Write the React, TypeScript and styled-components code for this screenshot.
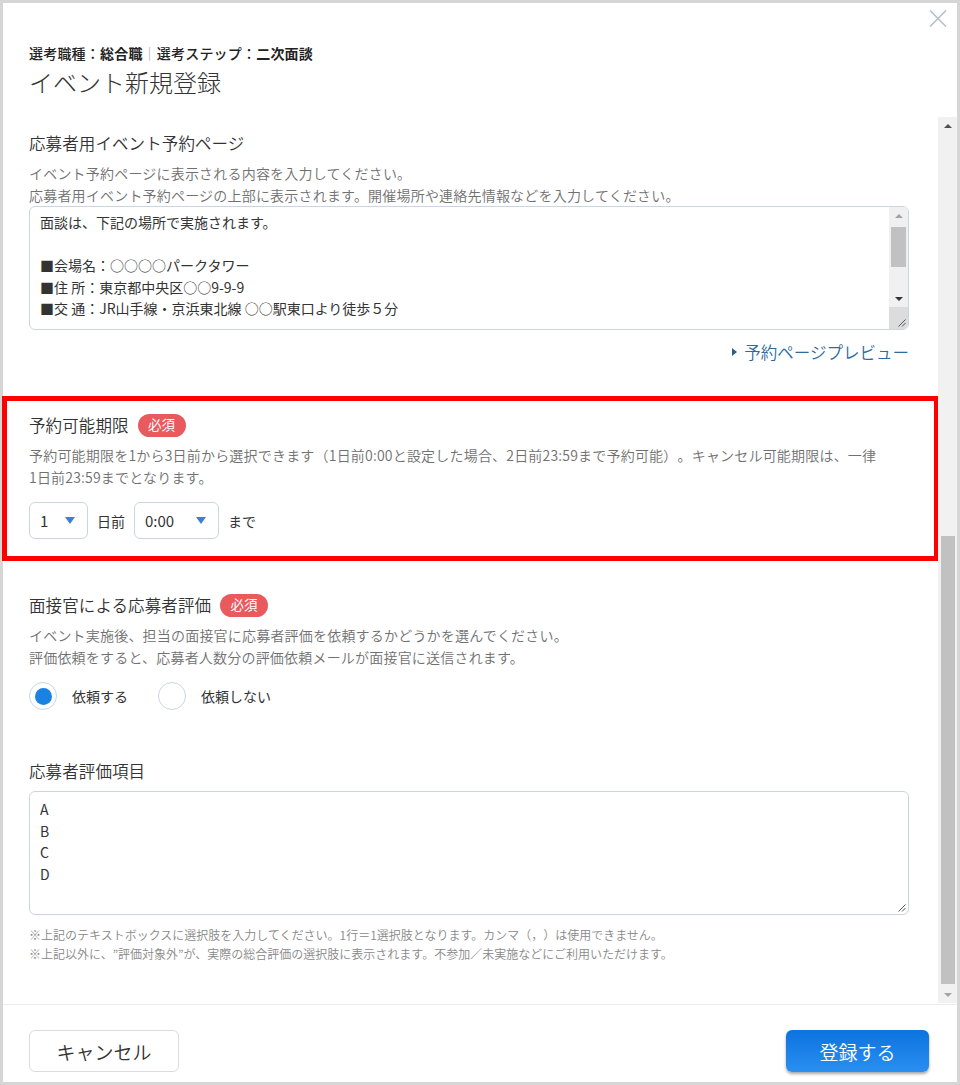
import React from "react";
import styled, { createGlobalStyle } from "styled-components";

const GlobalStyle = createGlobalStyle`
  html, body { margin: 0; padding: 0; background: #fff; }
  body {
    font-family: "Noto Sans CJK JP", "Noto Sans", sans-serif;
    color: #333;
    text-spacing-trim: space-all;
  }
  * { box-sizing: border-box; }
`;

const Modal = styled.div`
  position: relative;
  width: 960px;
  height: 1085px;
  border: 3px solid #d6d6d6;
  background: #fff;
  display: flex;
  flex-direction: column;
`;

const CloseButton = styled.button`
  position: absolute;
  top: 3px;
  right: 7px;
  width: 24px;
  height: 24px;
  padding: 0;
  border: none;
  background: none;
  display: flex;
  align-items: center;
  justify-content: center;
`;

const Header = styled.header`
  padding: 40px 26px 19px;
`;

const Breadcrumb = styled.div`
  font-size: 14px;
  line-height: 20px;
  color: #222;
  font-weight: 500;
  letter-spacing: 0.2px;
  b { font-weight: 700; }
`;

const Divider = styled.span`
  color: #aaa;
  font-weight: 400;
`;

const Title = styled.h1`
  margin: 3px 0 0;
  font-size: 24px;
  line-height: 32px;
  font-weight: 300;
  color: #333;
`;

const Body = styled.div`
  flex: 1;
  min-height: 0;
  display: flex;
`;

const Content = styled.div`
  flex: 1;
  min-width: 0;
  padding-top: 14px;
`;

const Section = styled.section<{ $top?: number; $highlight?: boolean }>`
  margin-top: ${(p) => p.$top ?? 0}px;
  ${(p) =>
    p.$highlight
      ? `
    margin-left: -1px;
    margin-right: -1px;
    border: 5px solid #ff0000;
    padding: 12px 25px 17px 22px;
  `
      : `
    padding: 0 29px 0 26px;
  `}
`;

const HeadingRow = styled.div`
  display: flex;
  align-items: center;
  gap: 9px;
  height: 24px;
`;

const Heading = styled.h2`
  margin: 0;
  font-size: 16.5px;
  line-height: 24px;
  font-weight: 350;
  color: #333;
  letter-spacing: 0.1px;
`;

const RequiredBadge = styled.span`
  display: inline-flex;
  align-items: center;
  justify-content: center;
  width: 48px;
  height: 23px;
  border-radius: 12px;
  background: #e85a5e;
  color: #fff;
  font-size: 13.5px;
  line-height: 1;
`;

const Description = styled.p`
  margin: 7px 0 0;
  font-size: 14px;
  line-height: 22px;
  letter-spacing: 0.2px;
  font-weight: 350;
  color: #707070;
`;

const TextBox = styled.div<{ $height: number; $gap?: number }>`
  position: relative;
  margin-top: ${(p) => p.$gap ?? 0}px;
  height: ${(p) => p.$height}px;
  border: 1px solid #c9d6e2;
  border-radius: 6px;
  display: flex;
  overflow: hidden;
  background: #fff;
`;

const TextBody = styled.div<{ $padTop: number }>`
  flex: 1;
  padding: ${(p) => p.$padTop}px 10px 0;
  font-size: 14px;
  line-height: 21.5px;
  color: #333;
  white-space: pre-wrap;
`;

const InnerScroll = styled.div`
  width: 19px;
  display: flex;
  flex-direction: column;
  background: #f0f0f0;
`;

const ScrollButton = styled.div<{ $h: number }>`
  height: ${(p) => p.$h}px;
  display: flex;
  align-items: center;
  justify-content: center;
`;

const Arrow = styled.span<{ $dir: "up" | "down"; $color: string }>`
  width: 0;
  height: 0;
  border-left: 4px solid transparent;
  border-right: 4px solid transparent;
  ${(p) =>
    p.$dir === "up"
      ? `border-bottom: 4px solid ${p.$color};`
      : `border-top: 4px solid ${p.$color};`}
`;

const Track = styled.div<{ $end?: boolean }>`
  flex: 1;
  display: flex;
  flex-direction: column;
  justify-content: ${(p) => (p.$end ? "flex-end" : "flex-start")};
  padding: ${(p) => (p.$end ? "0 2px 2px 3px" : "3px 2px 0 2px")};
`;

const Thumb = styled.div<{ $h: number }>`
  height: ${(p) => p.$h}px;
  background: #c1c1c1;
`;

const ResizeCorner = styled.div`
  height: 22px;
  background: #dcdcdc;
`;

const Grip = styled.svg`
  position: absolute;
  right: 2px;
  bottom: 2px;
`;

const LinkRow = styled.div`
  margin-top: 10px;
  display: flex;
  justify-content: flex-end;
`;

const PreviewLink = styled.a`
  display: inline-flex;
  align-items: center;
  gap: 7px;
  font-size: 16.5px;
  line-height: 24px;
  font-weight: 350;
  color: #2f6a9c;
  text-decoration: none;
  cursor: pointer;
  &::before {
    content: "";
    width: 0;
    height: 0;
    border-left: 5px solid #2d5f8a;
    border-top: 4px solid transparent;
    border-bottom: 4px solid transparent;
  }
`;

const ControlRow = styled.div`
  margin-top: 14px;
  display: flex;
  align-items: center;
  gap: 9px;
  font-size: 14px;
  color: #333;
`;

const Select = styled.div<{ $w: number }>`
  width: ${(p) => p.$w}px;
  height: 37px;
  border: 1px solid #c9d6e2;
  border-radius: 6px;
  padding: 0 12px 0 10px;
  display: flex;
  align-items: center;
  justify-content: space-between;
  font-size: 15px;
  color: #333;
  &::after {
    content: "";
    width: 0;
    height: 0;
    border-left: 5.5px solid transparent;
    border-right: 5.5px solid transparent;
    border-top: 7px solid #3b80d8;
  }
`;

const RadioGroup = styled.div`
  margin-top: 14px;
  display: flex;
  align-items: center;
  gap: 30px;
`;

const RadioItem = styled.label`
  display: flex;
  align-items: center;
  gap: 15px;
  font-size: 14px;
  color: #333;
`;

const RadioCircle = styled.span<{ $checked?: boolean }>`
  width: 28px;
  height: 28px;
  border-radius: 50%;
  border: 1px solid #cad5df;
  background: #fff;
  display: flex;
  align-items: center;
  justify-content: center;
  &::after {
    content: "";
    width: 17px;
    height: 17px;
    border-radius: 50%;
    background: ${(p) => (p.$checked ? "#1a82e2" : "transparent")};
  }
`;

const Notes = styled.div`
  margin-top: 10px;
  font-size: 12px;
  line-height: 19px;
  font-weight: 350;
  color: #888;
`;

const PageScroll = styled.div`
  width: 19px;
  height: 886px;
  background: #f1f1f1;
  display: flex;
  flex-direction: column;
`;

const Footer = styled.footer`
  border-top: 1px solid #ececec;
  height: 78px;
  padding: 25px 28px 10px 26px;
  display: flex;
  justify-content: space-between;
  align-items: flex-start;
`;

const Button = styled.button<{ $primary?: boolean }>`
  height: 42px;
  width: ${(p) => (p.$primary ? 143 : 150)}px;
  border-radius: 6px;
  font-family: inherit;
  font-size: 19px;
  font-weight: 350;
  line-height: 1;
  cursor: pointer;
  ${(p) =>
    p.$primary
      ? `
    border: none;
    color: #fff;
    background: linear-gradient(#0c73df, #2a8ff0);
    box-shadow: 0 2px 3px rgba(0, 0, 0, 0.35);
  `
      : `
    border: 1px solid #dcdcdc;
    color: #333;
    background: #fff;
  `}
`;

const ResizeGrip = () => (
  <Grip width="9" height="9" viewBox="0 0 9 9">
    <path d="M8.5 1.5 L1.5 8.5 M8.5 5 L5 8.5" stroke="#555" strokeWidth="1" fill="none" />
  </Grip>
);

const pageText = `面談は、下記の場所で実施されます。

■会場名：○○○○パークタワー
■住 所：東京都中央区○○9-9-9
■交 通：JR山手線・京浜東北線 ○○駅東口より徒歩５分`;

const choices = `A
B
C
D`;

export default function App() {
  return (
    <>
      <GlobalStyle />
      <Modal>
        <CloseButton aria-label="閉じる">
          <svg width="18" height="17" viewBox="0 0 18 17">
            <path d="M1 0.5 L17 16.5 M17 0.5 L1 16.5" stroke="#b6c1cc" strokeWidth="1.6" />
          </svg>
        </CloseButton>

        <Header>
          <Breadcrumb>
            選考職種：<b>総合職</b>
            <Divider>｜</Divider>選考ステップ：<b>二次面談</b>
          </Breadcrumb>
          <Title>イベント新規登録</Title>
        </Header>

        <Body>
          <Content>
            <Section>
              <HeadingRow>
                <Heading>応募者用イベント予約ページ</Heading>
              </HeadingRow>
              <Description>
                イベント予約ページに表示される内容を入力してください。
                <br />
                応募者用イベント予約ページの上部に表示されます。開催場所や連絡先情報などを入力してください。
              </Description>
              <TextBox $height={124}>
                <TextBody $padTop={5}>{pageText}</TextBody>
                <InnerScroll>
                  <ScrollButton $h={17}>
                    <Arrow $dir="up" $color="#a3a3a3" />
                  </ScrollButton>
                  <Track>
                    <Thumb $h={40} />
                  </Track>
                  <ScrollButton $h={17}>
                    <Arrow $dir="down" $color="#333" />
                  </ScrollButton>
                  <ResizeCorner />
                </InnerScroll>
                <ResizeGrip />
              </TextBox>
              <LinkRow>
                <PreviewLink>予約ページプレビュー</PreviewLink>
              </LinkRow>
            </Section>

            <Section $top={32} $highlight>
              <HeadingRow>
                <Heading>予約可能期限</Heading>
                <RequiredBadge>必須</RequiredBadge>
              </HeadingRow>
              <Description>
                予約可能期限を1から3日前から選択できます（1日前0:00と設定した場合、2日前23:59まで予約可能）。キャンセル可能期限は、一律
                <br />
                1日前23:59までとなります。
              </Description>
              <ControlRow>
                <Select $w={59}>1</Select>
                <span>日前</span>
                <Select $w={85}>0:00</Select>
                <span>まで</span>
              </ControlRow>
            </Section>

            <Section $top={32}>
              <HeadingRow>
                <Heading>面接官による応募者評価</Heading>
                <RequiredBadge>必須</RequiredBadge>
              </HeadingRow>
              <Description>
                イベント実施後、担当の面接官に応募者評価を依頼するかどうかを選んでください。
                <br />
                評価依頼をすると、応募者人数分の評価依頼メールが面接官に送信されます。
              </Description>
              <RadioGroup>
                <RadioItem>
                  <RadioCircle $checked />
                  依頼する
                </RadioItem>
                <RadioItem>
                  <RadioCircle />
                  依頼しない
                </RadioItem>
              </RadioGroup>
            </Section>

            <Section $top={49}>
              <HeadingRow>
                <Heading>応募者評価項目</Heading>
              </HeadingRow>
              <TextBox $height={124} $gap={8}>
                <TextBody $padTop={7}>{choices}</TextBody>
                <ResizeGrip />
              </TextBox>
              <Notes>
                ※上記のテキストボックスに選択肢を入力してください。1行＝1選択肢となります。カンマ（，）は使用できません。
                <br />
                ※上記以外に、”評価対象外”が、実際の総合評価の選択肢に表示されます。不参加／未実施などにご利用いただけます。
              </Notes>
            </Section>
          </Content>

          <PageScroll>
            <ScrollButton $h={17}>
              <Arrow $dir="up" $color="#505050" />
            </ScrollButton>
            <Track $end>
              <Thumb $h={448} />
            </Track>
            <ScrollButton $h={17}>
              <Arrow $dir="down" $color="#a3a3a3" />
            </ScrollButton>
          </PageScroll>
        </Body>

        <Footer>
          <Button>キャンセル</Button>
          <Button $primary>登録する</Button>
        </Footer>
      </Modal>
    </>
  );
}
